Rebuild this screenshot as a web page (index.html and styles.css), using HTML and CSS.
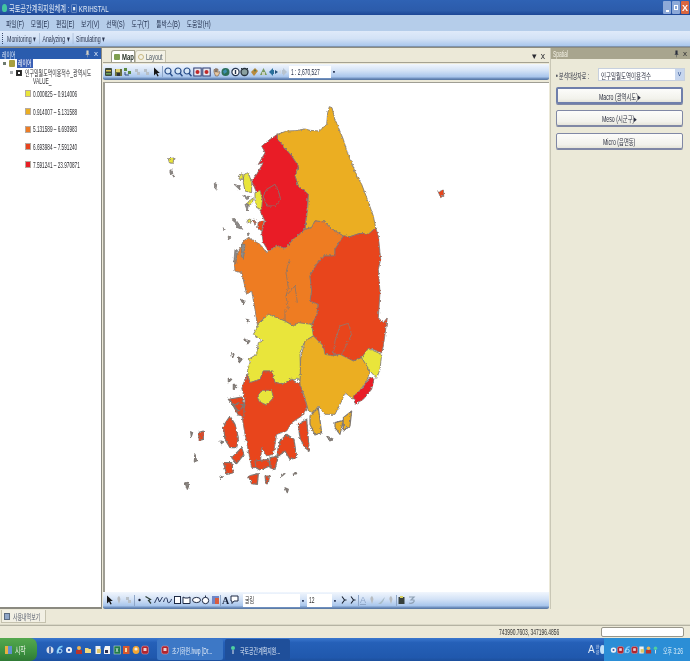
FILE: index.html
```html
<!DOCTYPE html>
<html lang="ko">
<head>
<meta charset="utf-8">
<title>국토공간계획지원체계</title>
<link rel="stylesheet" href="styles.css">
</head>
<body>
<svg class="defs" width="0" height="0" aria-hidden="true">
  <filter id="rough" x="-5%" y="-5%" width="110%" height="110%">
    <feTurbulence type="fractalNoise" baseFrequency=".14" numOctaves="2" seed="4" result="n"/>
    <feDisplacementMap in="SourceGraphic" in2="n" scale="9" xChannelSelector="R" yChannelSelector="G"/>
  </filter>
  <symbol id="i-pin" viewBox="0 0 6 9"><path d="M2 .5h2v3.500l1 1H1l1-1zM3 5v3.500" fill="#2c3040" stroke="#2c3040" stroke-width=".5"/></symbol>
  <symbol id="i-db" viewBox="0 0 9 10"><rect x="1" y="1" width="7" height="8" rx="1" fill="#3e4a3a"/><rect x="2" y="3" width="5" height="1.500" fill="#d8c050"/><rect x="2" y="6" width="5" height="1.500" fill="#6fa35a"/></symbol>
  <symbol id="i-sv" viewBox="0 0 9 10"><path d="M1 2h7v7H1z" fill="#6a6f3c"/><path d="M2 2h4v3H2z" fill="#e0d070"/><path d="M3 6h3v3H3z" fill="#30343a"/></symbol>
  <symbol id="i-ly" viewBox="0 0 9 10"><path d="M1 1h3v3H1zM5 4h3v3H5z" fill="#5a8a40"/><path d="M2 5v3h4" stroke="#304a80" fill="none"/></symbol>
  <symbol id="i-gh" viewBox="0 0 9 10"><path d="M2 2h3v3H2zM4 5h3v3H4z" fill="#b8c0c8"/></symbol>
  <symbol id="i-ar" viewBox="0 0 9 10"><path d="M2 .5v8l2-2 1.500 3 1.200-.6-1.500-2.900h2.600z" fill="#151515"/></symbol>
  <symbol id="i-zm" viewBox="0 0 9 10"><circle cx="4" cy="4" r="3" fill="#d8e8f8" stroke="#2a4f8a" stroke-width="1.200"/><path d="M6 6.200l2.500 3" stroke="#2a4f8a" stroke-width="1.500"/></symbol>
  <symbol id="i-zr" viewBox="0 0 9 10"><rect x=".8" y="1" width="7.400" height="8" fill="#e8e8f0" stroke="#2b3a70"/><circle cx="4.500" cy="5" r="2" fill="#c02828"/></symbol>
  <symbol id="i-hd" viewBox="0 0 9 10"><path d="M2 5V2.500h1V5h.5V1.500h1V5H5V2h1v3.500l1-1 1 .7L6 9H3.500z" fill="#e8c8a0" stroke="#5a4030" stroke-width=".5"/></symbol>
  <symbol id="i-gl" viewBox="0 0 9 10"><circle cx="4.500" cy="5" r="4" fill="#2c6f58"/><path d="M2 4l3-2 1 3-3 2z" fill="#3d8fb0"/></symbol>
  <symbol id="i-in" viewBox="0 0 9 10"><circle cx="4.500" cy="5" r="3.600" fill="#fff" stroke="#26364f" stroke-width="1.200"/><path d="M4.500 3v4" stroke="#26364f" stroke-width="1.400"/></symbol>
  <symbol id="i-fr" viewBox="0 0 9 10"><circle cx="4.500" cy="5" r="3.500" fill="#8aa0a0" stroke="#27323c" stroke-width="1.300"/><path d="M1 1l2 2M8 1L6 3" stroke="#27323c"/></symbol>
  <symbol id="i-tg" viewBox="0 0 9 10"><path d="M1 5l4-4 3 3-4 5z" fill="#b88a3c"/><circle cx="5" cy="3.500" r="1" fill="#567a4a"/></symbol>
  <symbol id="i-ms" viewBox="0 0 9 10"><path d="M4.500 1l3.500 7H1z" fill="#7a9a60"/><path d="M3 5h3v3H3z" fill="#c8d0c0"/></symbol>
  <symbol id="i-lf" viewBox="0 0 9 10"><path d="M0 5l4-4v2h1v4H4v2z" fill="#2a6f9a"/><path d="M6 3l3 2-3 2z" fill="#245078"/></symbol>
  <symbol id="i-rt" viewBox="0 0 9 10"><path d="M9 5L5 1v2H4v4h1v2z" fill="#b8c4d0"/><path d="M3 3L0 5l3 2z" fill="#cdd6e0"/></symbol>
  <symbol id="i-dr" viewBox="0 0 9 10"><path d="M4 1c-2 1-2 3-1 5l1 3 1-3c1-2 0-4-1-5z" fill="#b8bcc0"/></symbol>
  <symbol id="i-dot" viewBox="0 0 9 10"><circle cx="4.500" cy="5" r="1.200" fill="#151a30"/></symbol>
  <symbol id="i-pn" viewBox="0 0 9 10"><path d="M1.500 1.500l5 3-2 1 2.500 3" stroke="#30403a" stroke-width="1.200" fill="none"/></symbol>
  <symbol id="i-ln" viewBox="0 0 9 10"><path d="M.5 8l3-6 2 5 3-5" stroke="#2a3a60" fill="none"/></symbol>
  <symbol id="i-cv" viewBox="0 0 9 10"><path d="M.5 7c2-7 4-4 4-1s3 2 4-2" stroke="#2a3a60" fill="none"/></symbol>
  <symbol id="i-rc" viewBox="0 0 9 10"><rect x="1.500" y="1.500" width="6" height="7" fill="#fff" stroke="#1e2a45"/></symbol>
  <symbol id="i-pg" viewBox="0 0 9 10"><path d="M1 2l2 1h3l2-1v6.500H1z" fill="#fff" stroke="#1e2a45"/></symbol>
  <symbol id="i-el" viewBox="0 0 9 10"><ellipse cx="4.500" cy="5" rx="4" ry="2.600" fill="#fff" stroke="#1e2a45"/></symbol>
  <symbol id="i-ci" viewBox="0 0 9 10"><circle cx="4.500" cy="5.500" r="3.200" fill="#fff" stroke="#1e2a45"/><path d="M4.500 .5v2" stroke="#1e2a45"/></symbol>
  <symbol id="i-im" viewBox="0 0 9 10"><rect x="1" y="1" width="7" height="8" fill="#6f87c8"/><rect x="4" y="3" width="4" height="6" fill="#d85c40"/></symbol>
  <symbol id="i-cl" viewBox="0 0 9 10"><path d="M1 1h7v5H4L2 8.500V6H1z" fill="#fff" stroke="#1e2a45"/></symbol>
  <symbol id="i-bd" viewBox="0 0 9 10"><path d="M3 1.500l2.500 3.500L3 8.500M5.500 5H7.500" stroke="#17202f" stroke-width="1.100" fill="none"/></symbol>
  <symbol id="i-fa" viewBox="0 0 9 10"><path d="M1 9c3-2 4-4 7-7-1 3-2 5-4 7z" fill="#a8bcc8"/></symbol>
  <symbol id="i-bk" viewBox="0 0 9 10"><rect x="1.500" y="2" width="6" height="7" fill="#37403c"/><rect x="3" y="1" width="3" height="2" fill="#d8d060"/></symbol>
  <symbol id="i-ro" viewBox="0 0 9 10"><path d="M2 2h5L4 5h3c1 2-2 4-5 3" stroke="#8ea0b4" fill="none" stroke-width="1.200"/></symbol>
  <symbol id="q-a" viewBox="0 0 8 10"><circle cx="4" cy="5" r="3.500" fill="#d8dde8"/><path d="M3 2h2v6H3z" fill="#4c6aa8"/></symbol>
  <symbol id="q-e" viewBox="0 0 8 10"><path d="M6.500 1.500C3 1 1 5 1.500 8.500" stroke="#7fd0ff" stroke-width="1.500" fill="none"/><circle cx="4" cy="6" r="2" fill="none" stroke="#b8e4ff"/></symbol>
  <symbol id="q-w" viewBox="0 0 8 10"><rect x="1" y="2" width="6" height="6" rx="2.500" fill="#eef2f8"/><circle cx="4" cy="5" r="1.200" fill="#365cae"/></symbol>
  <symbol id="q-o" viewBox="0 0 8 10"><circle cx="4" cy="3" r="2" fill="#f2b24c"/><path d="M1 5h6v4H1z" fill="#b8342c"/></symbol>
  <symbol id="q-f" viewBox="0 0 8 10"><path d="M1 3h3l1 1h2v4H1z" fill="#f0d880"/></symbol>
  <symbol id="q-p" viewBox="0 0 8 10"><path d="M1.500 1h5v8h-5z" fill="#eef0f0"/><path d="M3 4h4v4H3z" fill="#e0c868"/></symbol>
  <symbol id="q-d" viewBox="0 0 8 10"><path d="M2 1h5v8H1V4z" fill="#f4f4f4"/><path d="M2 5h3v3H2z" fill="#2a3050"/></symbol>
  <symbol id="q-x" viewBox="0 0 8 10"><rect x="1" y="1" width="6.500" height="8" fill="#1f7a4a" stroke="#d8e8d8" stroke-width=".5"/><path d="M3 3l2 4M5 3L3 7" stroke="#fff" stroke-width=".6"/></symbol>
  <symbol id="q-h" viewBox="0 0 8 10"><rect x="1" y="1" width="6.500" height="8" fill="#d8582e"/><path d="M3 3h2v4H3z" fill="#f8d8a0"/></symbol>
  <symbol id="q-g" viewBox="0 0 8 10"><ellipse cx="4" cy="5" rx="3.400" ry="4" fill="#f2a634"/><circle cx="4" cy="4" r="1.600" fill="#f8ecd8"/></symbol>
  <symbol id="q-r" viewBox="0 0 8 10"><rect x=".5" y="1" width="7" height="8" rx="2" fill="#b02530" stroke="#e8a0a0" stroke-width=".5"/><rect x="2.500" y="3" width="3" height="3" fill="#f0d0d0"/></symbol>
  <symbol id="q-b" viewBox="0 0 8 10"><circle cx="4" cy="3" r="2" fill="#4fd0a0"/><path d="M4 5v4" stroke="#e0e8f0"/></symbol>
</svg>

<div class="app">
  <header class="titlebar">
    <span class="app-dot"></span>
    <span class="sq title-text">국토공간계획지원체계 : ▣ KRIHSTAL</span>
    <span class="win-btns">
      <span class="win-btn"><i class="win-min"></i></span>
      <span class="win-btn"><i class="win-max"></i></span>
      <span class="win-btn win-close">X</span>
    </span>
  </header>

  <nav class="menubar">
    <div class="menu-items">
      <span>파일(F)</span><span>모델(E)</span><span>편집(E)</span><span>보기(V)</span><span>선택(S)</span><span>도구(T)</span><span>툴박스(B)</span><span>도움말(H)</span>
    </div>
  </nav>

  <div class="cmdbar">
    <span class="grip"></span>
    <div class="cmd-items">
      <span class="cmd">Monitoring ▾</span><span class="cmd-sep"></span>
      <span class="cmd">Analyzing ▾</span><span class="cmd-sep"></span>
      <span class="cmd">Simulating ▾</span>
    </div>
  </div>

  <main class="workspace">
    <aside class="toc">
      <div class="toc-head"><span class="sq">레이어</span><span class="head-ctl"><svg class="pin"><use href="#i-pin"/></svg>x</span></div>
      <div class="toc-body">
        <div class="tree-root"><i class="tree-box"></i><i class="tree-folder"></i><span class="tree-sel"><span class="sq">레이어</span></span></div>
        <div class="tree-layer"><i class="tree-box tree-box-lt"></i><i class="tree-check"></i><span class="sq">인구밀월도먹이용적수_광역시도</span></div>
        <div class="tree-field"><span class="sq">VALUE_</span></div>
        <ul class="legend">
          <li><i class="sw sw-1"></i><span class="sq">0.000825 – 0.914006</span></li>
          <li><i class="sw sw-2"></i><span class="sq">0.914007 – 5.131588</span></li>
          <li><i class="sw sw-3"></i><span class="sq">5.131589 – 6.693983</span></li>
          <li><i class="sw sw-4"></i><span class="sq">6.693984 – 7.591240</span></li>
          <li><i class="sw sw-5"></i><span class="sq">7.591241 – 23.970871</span></li>
        </ul>
      </div>
    </aside>

    <section class="center">
      <div class="tabstrip">
        <div class="tab tab-on"><i class="tab-ico"></i><span class="sq">Map</span></div>
        <div class="tab tab-off"><i class="tab-ico tab-ico-l"></i><span class="sq">Layout</span></div>
        <span class="tab-ctl">▾ x</span>
      </div>

      <div class="bluebar maptools">
        <svg class="ic"><use href="#i-db"/></svg><svg class="ic"><use href="#i-sv"/></svg><svg class="ic"><use href="#i-ly"/></svg><svg class="ic"><use href="#i-gh"/></svg><svg class="ic"><use href="#i-gh"/></svg><svg class="ic"><use href="#i-ar"/></svg>
        <i class="tsep"></i>
        <svg class="ic"><use href="#i-zm"/></svg><svg class="ic"><use href="#i-zm"/></svg><svg class="ic"><use href="#i-zm"/></svg><svg class="ic"><use href="#i-zr"/></svg><svg class="ic"><use href="#i-zr"/></svg><svg class="ic"><use href="#i-hd"/></svg><svg class="ic"><use href="#i-gl"/></svg><svg class="ic"><use href="#i-in"/></svg><svg class="ic"><use href="#i-fr"/></svg><svg class="ic"><use href="#i-tg"/></svg><svg class="ic"><use href="#i-ms"/></svg><svg class="ic"><use href="#i-lf"/></svg><svg class="ic"><use href="#i-rt"/></svg>
        <span class="scale"><span class="sq">1 : 2,670,527</span></span><span class="drop">▪</span>
      </div>

      <div class="canvas">
        <svg class="map" viewBox="105 82 443 508" role="img" aria-label="지도">
          <g transform="translate(160 95) scale(.33333)" stroke="#7f7873" stroke-width="2.500" stroke-linejoin="round" filter="url(#rough)">
            <path class="c-gold" d="M352 115L380 105 405 104 435 99 450 103 478 105 500 85 503 50 508 32 516 35 525 70 550 130 562 170 575 200 590 240 605 265 622 310 640 360 647 395 625 415 600 412 570 422 550 420 510 395 495 378 465 375 455 395 435 400 443 340 445 295 415 270 405 240 415 210 395 180 370 150 352 130Z"/>
            <path class="c-red" d="M352 115L352 130 370 150 395 180 415 210 405 240 415 270 445 295 435 400 400 430 375 458 350 448 325 465 310 440 305 410 315 375 300 345 305 320 290 290 275 255 290 235 310 200 295 205 315 170 305 150 330 130Z"/>
            <path fill="none" stroke="#8f6a68" stroke-width="3" d="M310 300L320 280 345 265 355 285 362 310 345 330 320 330Z"/>
            <path class="c-orange" d="M222 490L240 460 250 435 265 425 300 445 320 470 350 448 375 458 400 430 435 400 455 395 465 375 495 378 510 395 550 420 525 460 525 480 490 480 470 505 450 540 455 585 450 615 475 625 470 660 455 685 445 683 415 690 400 690 375 675 325 655 292 685 285 640 275 585 260 595 245 530 225 525Z"/>
            <path fill="none" stroke="#8d7668" d="M388 490L378 530 385 575 378 600 385 640M378 600L405 570 412 620M375 675V640"/>
            <path class="c-redorange" d="M550 420L570 422 600 412 625 415 647 395 655 420 662 490 655 520 660 590 655 665 670 680 682 665 670 750 665 770 630 757 605 785 580 795 540 775 520 780 495 775 490 750 460 720 455 685 470 660 475 625 450 615 455 585 450 540 470 505 490 480 525 480 525 460Z"/>
            <path fill="none" stroke="#a0705f" stroke-width="3" d="M520 775L525 735 540 690 565 682 575 715 560 745 545 775Z"/>
            <path class="c-yellow" d="M292 685L325 655 375 675 400 690 415 680 455 685 460 720 435 735 420 770 422 850 395 850 370 863 345 860 335 825 310 825 300 850 270 860 262 825 270 800 265 790 290 775 295 740 310 735 280 715 292 695Z"/>
            <path class="c-gold" d="M460 720L490 750 495 775 520 780 540 775 580 795 605 785 630 825 620 855 580 910 555 890 545 915 525 955 495 955 475 930 460 950 445 945 435 905 420 865 422 785 435 735Z"/>
            <path class="c-yellow" d="M605 785L625 757 665 775 660 820 650 847 630 825Z"/>
            <path class="c-red" d="M580 900L605 880 630 843 642 850 635 880 610 910 585 925Z"/>
            <path class="c-redorange" d="M245 875L262 835 270 860 300 850 310 825 335 825 345 860 370 863 395 850 420 865 442 935 425 960 395 980 380 1005 350 1015 340 1075 320 1080 305 1055 300 1115 275 1115 265 1065 255 1015 245 955 255 915Z"/>
            <path class="c-yellow" d="M292 903L305 883 335 883 340 905 320 927 298 917Z"/>
            <path class="c-yellow" d="M252 235L265 230 275 260 275 290 255 285 250 260ZM285 290L300 283 307 310 305 340 290 335 285 310ZM235 240L248 232 250 250 238 250ZM262 320L280 305 278 320 265 330ZM25 188L42 186 38 202 28 200ZM263 372L272 368 272 382 264 380Z"/>
            <path class="c-redorange" d="M835 288L850 282 852 298 842 305ZM280 372L290 375 285 388ZM295 378L312 375 305 405 293 395Z"/>
            <path class="c-gray" d="M222 265L240 270 240 282ZM248 298L270 302 262 312ZM255 325L265 325 262 345ZM217 368L225 368 248 400 232 395ZM30 222L38 222 36 235 30 232ZM38 238L44 238 42 244ZM163 262L170 265 168 280 164 275ZM225 460L232 462 228 500 222 495ZM245 445L255 445 250 490 244 480ZM190 395L195 400 192 405ZM205 420L212 425 205 432ZM262 410L268 412 264 420Z"/>
            <g transform="translate(30 585)" stroke-width="3.500">
              <path class="c-redorange" d="M175 325L215 318 225 345 205 360ZM190 345L205 335 222 345 222 375 205 372ZM160 405L180 375 195 400 205 440 200 470 180 470 165 445ZM185 500L215 470 222 490 200 518ZM330 450L350 430 372 445 380 500 360 505 345 480 320 500 325 470ZM385 400L410 385 418 480 405 470 390 440ZM300 500L325 495 315 535 300 530ZM255 510L295 505 300 525 270 537 258 530ZM160 515L185 515 190 545 170 550ZM235 555L265 548 262 580 245 578ZM285 555L298 555 295 578 288 578ZM85 425L100 420 100 445 88 448Z"/>
              <path class="c-gold" d="M420 375L445 350 455 425 435 432 420 400ZM520 380L545 360 540 405 520 420ZM495 395L520 388 510 430 495 410Z"/>
              <path class="c-gray" d="M345 590L355 595 352 605ZM45 575L58 580 52 595ZM75 490L80 510 73 510ZM62 422L68 425 64 437ZM212 25L225 30 220 40ZM225 145L240 150 232 160ZM185 185L192 190 188 200ZM205 198L216 205 208 215ZM175 262L185 265 175 275ZM190 280L200 285 190 295ZM150 450L160 452 155 458ZM375 545L380 548 370 550ZM335 550L345 548 335 556ZM470 435L490 445 480 450ZM230 85L238 88 232 92ZM150 555L158 558 152 562Z"/>
            </g>
          </g>
        </svg>
      </div>

      <div class="bluebar drawtools">
        <svg class="ic"><use href="#i-ar"/></svg><svg class="ic"><use href="#i-dr"/></svg><svg class="ic"><use href="#i-gh"/></svg>
        <i class="tsep"></i>
        <svg class="ic"><use href="#i-dot"/></svg><svg class="ic"><use href="#i-pn"/></svg><svg class="ic"><use href="#i-ln"/></svg><svg class="ic"><use href="#i-cv"/></svg><svg class="ic"><use href="#i-rc"/></svg><svg class="ic"><use href="#i-pg"/></svg><svg class="ic"><use href="#i-el"/></svg><svg class="ic"><use href="#i-ci"/></svg><svg class="ic"><use href="#i-im"/></svg>
        <i class="tsep"></i>
        <span class="t-a">A</span><svg class="ic"><use href="#i-cl"/></svg>
        <span class="field field-font"><span class="sq">굴림</span></span><span class="drop">▪</span>
        <span class="field field-size"><span class="sq">12</span></span><span class="drop">▪</span>
        <svg class="ic"><use href="#i-bd"/></svg><svg class="ic"><use href="#i-bd"/></svg>
        <i class="tsep"></i>
        <span class="t-u">A</span><svg class="ic"><use href="#i-dr"/></svg><svg class="ic"><use href="#i-fa"/></svg><svg class="ic"><use href="#i-dr"/></svg>
        <i class="tsep"></i>
        <svg class="ic"><use href="#i-bk"/></svg><svg class="ic"><use href="#i-ro"/></svg>
      </div>
    </section>

    <aside class="spatial">
      <div class="spatial-head"><span class="sq">Spatial</span><span class="head-ctl"><svg class="pin"><use href="#i-pin"/></svg>x</span></div>
      <div class="spatial-body">
        <div class="combo-row">
          <span class="combo-label"><span class="sq">• 분석대상자료 :</span></span>
          <div class="combo"><span class="sq">인구밀월도역이용격수</span><i class="combo-btn">v</i></div>
        </div>
        <button class="btn btn-on"><span class="sq-c">Macro (광역시도)▸</span></button>
        <button class="btn"><span class="sq-c">Meso (시군구)▸</span></button>
        <button class="btn"><span class="sq-c">Micro (읍면동)</span></button>
      </div>
    </aside>
  </main>

  <div class="bottomtabs"><div class="btab"><i class="btab-ico"></i><span class="sq">사용내역보기</span></div></div>

  <div class="statusbar">
    <span class="coords"><span class="sq">743990.7603, 347196.4856</span></span>
    <span class="progress"></span>
  </div>

  <footer class="taskbar">
    <div class="start"><i class="flag"></i><span class="sq">시작</span></div>
    <div class="quick">
      <svg class="qi"><use href="#q-a"/></svg><svg class="qi"><use href="#q-e"/></svg><svg class="qi"><use href="#q-w"/></svg><svg class="qi"><use href="#q-o"/></svg><svg class="qi"><use href="#q-f"/></svg><svg class="qi"><use href="#q-p"/></svg><svg class="qi"><use href="#q-d"/></svg><svg class="qi"><use href="#q-x"/></svg><svg class="qi"><use href="#q-h"/></svg><svg class="qi"><use href="#q-g"/></svg><svg class="qi"><use href="#q-r"/></svg>
    </div>
    <div class="task task-a"><svg class="qi"><use href="#q-r"/></svg><span class="sq">초기화면.hwp [Dr...</span></div>
    <div class="task task-b"><svg class="qi"><use href="#q-b"/></svg><span class="sq">국토공간계획지원...</span></div>
    <div class="ime"><span class="ime-a">A</span><span class="ime-k">한<br>글</span><i class="ime-c"></i></div>
    <div class="tray">
      <svg class="qi"><use href="#q-w"/></svg><svg class="qi"><use href="#q-r"/></svg><svg class="qi"><use href="#q-e"/></svg><svg class="qi"><use href="#q-r"/></svg><svg class="qi"><use href="#q-p"/></svg><svg class="qi"><use href="#q-o"/></svg><svg class="qi"><use href="#q-b"/></svg>
      <span class="clock"><span class="sq">오후 3:26</span></span>
    </div>
  </footer>
</div>
</body>
</html>
```
FILE: styles.css
```css
* { box-sizing: border-box; }
html, body { margin: 0; padding: 0; }
body {
  width: 690px;
  height: 661px;
  overflow: hidden;
  background: #ece9d8;
  font-family: "Liberation Sans", "Noto Sans CJK KR", sans-serif;
  font-size: 8.500px;
  color: #26304a;
}
.defs { position: absolute; }
.app {
  width: 690px;
  height: 661px;
  display: flex;
  flex-direction: column;
  filter: blur(0.45px);
}
i { display: block; font-style: normal; }

/* the reference is squeezed sideways: condensed text */
.sq {
  display: inline-block;
  white-space: nowrap;
  transform: scaleX(.58);
  transform-origin: 0 50%;
}
.sq-c {
  display: inline-block;
  white-space: nowrap;
  transform: scaleX(.62);
}

/* title */
.titlebar {
  height: 15px;
  flex: none;
  display: flex;
  align-items: center;
  padding-left: 2px;
  background: linear-gradient(#2f62b4, #2c5cab 70%, #1d4796);
  color: #dfe8f4;
  font-size: 9.500px;
}
.title-text { transform: scaleX(.65); }
.app-dot {
  width: 5px; height: 8px;
  margin-right: 2px;
  border-radius: 50% 50% 40% 40%;
  background: #43c5a0;
  flex: none;
}
.win-btns { margin-left: auto; display: flex; gap: 1px; padding-right: 1px; }
.win-btn {
  width: 8px; height: 13px;
  display: flex; align-items: center; justify-content: center;
  background: #8da9d8;
  border-radius: 1px;
  color: #fff;
  font-size: 9px;
  font-weight: 700;
}
.win-close { background: #d9663f; }
.win-min { width: 3px; height: 2px; background: #fff; margin-top: 6px; }
.win-max { width: 4px; height: 5px; border: 1px solid #fff; }

/* menu */
.menubar {
  height: 16px;
  flex: none;
  padding-left: 6px;
  background: #b5cdea;
  color: #1e2c4a;
}
.menu-items {
  height: 100%;
  display: flex;
  align-items: center;
  gap: 10px;
  font-size: 8.500px;
  white-space: nowrap;
  transform: scaleX(.68);
  transform-origin: 0 50%;
}

/* command toolbar */
.cmdbar {
  height: 16px;
  flex: none;
  display: flex;
  align-items: center;
  padding-left: 2px;
  background: linear-gradient(#dfeafa, #d3e2f6 50%, #a9c6ec);
  border-bottom: 1px solid #7f93ad;
  color: #2a3550;
}
.grip { width: 1px; height: 11px; margin-right: 4px; border-left: 1px dotted #38486a; flex: none; }
.cmd-items {
  display: flex;
  align-items: center;
  font-size: 8.500px;
  white-space: nowrap;
  transform: scaleX(.62);
  transform-origin: 0 50%;
}
.cmd-sep { width: 1px; height: 11px; margin: 0 4px 0 5px; background: #9fb3cf; }

/* workspace */
.workspace {
  height: 562px;
  flex: none;
  display: grid;
  grid-template-columns: 102px 447px 141px;
  background: #ece9d8;
  border-top: 1px solid #8e8c7e;
}
.toc { display: flex; flex-direction: column; border-right: 1px solid #8b8a80; border-bottom: 2px solid #8b8a80; }
.toc-head {
  height: 11px;
  flex: none;
  display: flex;
  justify-content: space-between;
  align-items: center;
  padding: 0 3px 0 2px;
  background: #2a5cae;
  color: #dce6f5;
}
.head-ctl { display: flex; align-items: center; gap: 4px; font-size: 8px; }
.pin { width: 5px; height: 8px; }
.toc .pin { filter: invert(1); }
.toc-body { flex: 1; background: #fff; color: #2c2c30; line-height: 8px; }
.tree-root { height: 9px; display: flex; align-items: center; padding-left: 3px; }
.tree-box { width: 3px; height: 3px; background: #6e7a70; flex: none; }
.tree-box-lt { background: #a9adb0; }
.tree-folder { width: 6px; height: 7px; margin: 0 2px 0 3px; background: #a8a040; border-radius: 1px; flex: none; }
.tree-sel { background: #3a5fb5; color: #fff; padding: 0 1px; width: 16px; height: 9px; line-height: 9px; overflow: hidden; }
.tree-layer { height: 9px; display: flex; align-items: center; padding-left: 10px; }
.tree-check { width: 6px; height: 6px; margin: 0 3px; border: 1px solid #333; background: #fff; box-shadow: inset 0 0 0 1px #222; flex: none; }
.tree-field { padding-left: 33px; height: 8px; line-height: 8px; }
.legend { list-style: none; margin: 0; padding: 0 0 0 25px; }
.legend li { height: 17.700px; display: flex; align-items: center; }
.legend .sq { transform: scaleX(.55); }
.sw { width: 6px; height: 7px; margin-right: 2px; border: 1px solid #b5aaa0; flex: none; }
.sw-1 { background: #e9e53a; }
.sw-2 { background: #ebae22; }
.sw-3 { background: #ee7c24; }
.sw-4 { background: #e8441f; }
.sw-5 { background: #e91e25; }

/* center */
.center { display: flex; flex-direction: column; padding-left: 1px; min-width: 0; }
.tabstrip {
  height: 15px;
  flex: none;
  display: flex;
  align-items: flex-end;
  padding-left: 8px;
  position: relative;
  background: #ece9d8;
  border-bottom: 1px solid #a5a292;
}
.tab {
  height: 12px;
  display: flex;
  align-items: center;
  padding: 0 2px;
  border: 1px solid #c5c2ae;
  border-bottom: 0;
  border-radius: 3px 1px 0 0;
  background: #f3f1e5;
  color: #4e5a66;
  overflow: hidden;
}
.tab-on { width: 24px; background: #fff; font-weight: 700; color: #1f2b20; border-color: #9a9a88; }
.tab-off { width: 31px; }
.tab-ico { width: 6px; height: 6px; margin-right: 2px; background: #7f9f50; border-radius: 1px; flex: none; }
.tab-ico-l { background: none; border: 1px solid #c8b880; border-radius: 50%; }
.tab-on .sq { transform: scaleX(.7); }
.tab-off .sq { transform: scaleX(.65); }
.tab-ctl { position: absolute; right: 4px; top: 3px; word-spacing: 1px; color: #2a2a30; }
.bluebar {
  flex: none;
  display: flex;
  align-items: center;
  background: linear-gradient(#f1f6fd, #d3e2f6 45%, #a9c6ec 85%, #5f81b2);
  border-radius: 0 0 2px 2px;
}
.maptools { height: 16px; margin-top: 1px; padding-left: 1px; border-bottom: 1px solid #5d7ca8; }
.ic { width: 9px; height: 10px; margin-right: .5px; flex: none; }
.tsep { width: 1px; height: 11px; background: #8ea6c8; margin: 0 1px; flex: none; }
.scale {
  width: 42px; height: 12px;
  margin-left: 1px;
  padding-left: 2px;
  background: #fff;
  line-height: 12px;
  overflow: hidden;
  color: #26304a;
  flex: none;
}
.drop { width: 7px; font-size: 7px; text-align: center; color: #1d2c4f; flex: none; }
.canvas {
  height: 510px;
  flex: none;
  margin-top: 2px;
  background: #fff;
  border-top: 1px solid #9f9e94;
  border-left: 2px solid #9f9e94;
  overflow: hidden;
}
.map { display: block; width: 443px; height: 508px; }
.c-gold { fill: #ebae22; }
.c-red { fill: #e91e25; }
.c-orange { fill: #ee7c24; }
.c-redorange { fill: #e8441f; }
.c-yellow { fill: #e9e53a; }
.c-gray { fill: #8d8b89; }
.drawtools { height: 17px; padding-left: 2px; border-bottom: 1px solid #5d7ca8; }
.drawtools .tsep { margin: 0; }
.t-a { width: 9px; font: 700 10px "Liberation Serif", serif; color: #15203a; text-align: center; flex: none; }
.t-u { width: 9px; font-size: 9px; color: #8ea6c8; text-decoration: underline; text-align: center; flex: none; }
.field {
  height: 13px;
  background: #fff;
  line-height: 13px;
  padding-left: 2px;
  color: #333;
  overflow: hidden;
  flex: none;
}
.field-font { width: 57px; margin-left: 3px; }
.field-size { width: 25px; }

/* right panel */
.spatial { display: flex; flex-direction: column; background: #ebe9d8; border-left: 1px solid #c9c7b6; margin-left: 1px; }
.spatial-head {
  height: 11px;
  flex: none;
  display: flex;
  justify-content: space-between;
  align-items: center;
  padding: 0 3px 0 2px;
  background: #a8a58e;
  color: #f3f1e5;
}
.spatial-head .head-ctl { color: #2c2c30; }
.spatial-body { padding: 9px 5px 0 5px; display: flex; flex-direction: column; }
.combo-row { display: flex; align-items: center; height: 13px; margin-bottom: 6px; color: #2c3040; }
.combo-label { width: 42px; flex: none; }
.combo {
  width: 88px; height: 13px;
  display: flex;
  justify-content: space-between;
  align-items: center;
  padding-left: 2px;
  background: #fff;
  border: 1px solid #c7d0de;
  overflow: hidden;
}
.combo .sq { width: 70px; transform: scaleX(.64); }
.combo-btn { width: 9px; height: 100%; background: #c7d6ee; color: #3a5a98; font-size: 7px; text-align: center; line-height: 10px; flex: none; }
.btn {
  width: 127px;
  height: 16px;
  margin: 0 0 7px;
  padding: 0;
  border: 1px solid #8088a5;
  border-radius: 2px;
  box-shadow: 0 1px 0 #8088a5;
  background: linear-gradient(#fcfcfa, #f2f2ec 75%, #e6e5da);
  font-family: inherit;
  font-size: 8.500px;
  color: #2c3040;
  flex: none;
}
.btn-on { height: 17px; margin-bottom: 6px; border: 2px solid #6f7fab; }

/* bottom tabs */
.bottomtabs {
  height: 16px;
  flex: none;
  padding-left: 1px;
  background: #ece9d8;
  border-bottom: 1px solid #d9d7c6;
}
.btab {
  width: 45px; height: 13px;
  display: flex;
  align-items: center;
  margin-top: 1px;
  background: #f2f0e4;
  border: 1px solid #c5c2ae;
  border-top: 0;
  color: #5a6070;
  overflow: hidden;
}
.btab-ico { width: 6px; height: 7px; margin: 0 3px 0 2px; background: #8fa6c8; border: 1px solid #5a6a80; flex: none; }

/* status */
.statusbar {
  height: 13px;
  flex: none;
  display: flex;
  align-items: center;
  background: #ece9d8;
  border-top: 1px solid #b5b3a3;
  color: #333;
}
.coords { margin-left: 499px; width: 102px; flex: none; }
.progress { width: 83px; height: 10px; background: #fff; border: 1px solid #98968a; border-radius: 2px; }

/* taskbar */
.taskbar {
  flex: 1;
  display: flex;
  align-items: stretch;
  background: linear-gradient(#3b78cf, #2560b8 20%, #2058ad 85%, #1c4f9c);
  color: #dfe9f6;
}
.start {
  width: 37px;
  display: flex;
  align-items: center;
  gap: 3px;
  padding-left: 5px;
  background: linear-gradient(#55a84e, #3c9140 60%, #2f7a35);
  border-radius: 0 7px 7px 0;
  font-size: 10px;
  color: #eaf4e6;
  flex: none;
}
.flag { width: 7px; height: 8px; background: linear-gradient(90deg, #e8b040 50%, #5f90d0 50%); flex: none; }
.quick { width: 120px; display: flex; align-items: center; gap: 1.500px; padding-left: 9px; flex: none; }
.qi { width: 8px; height: 10px; flex: none; }
.task { display: flex; align-items: center; gap: 3px; padding-left: 4px; margin: 1px 0; border-radius: 2px; overflow: hidden; flex: none; }
.task-a { width: 66px; background: #3d78c6; }
.task-b { width: 65px; margin-left: 2px; background: #1f4f9a; }
.ime { margin-left: 298px; width: 16px; display: flex; align-items: center; gap: 1px; flex: none; }
.ime-a { font-size: 10px; }
.ime-k { font-size: 4px; line-height: 5px; }
.ime-c { width: 5px; height: 9px; border-radius: 50%; background: #bfe0f8; flex: none; }
.tray {
  flex: 1;
  display: flex;
  align-items: center;
  padding-left: 6px;
  background: #2b8ed6;
  min-width: 0;
}
.tray .qi { width: 7px; }
.clock { margin-left: 4px; color: #d8ecf8; }
```
